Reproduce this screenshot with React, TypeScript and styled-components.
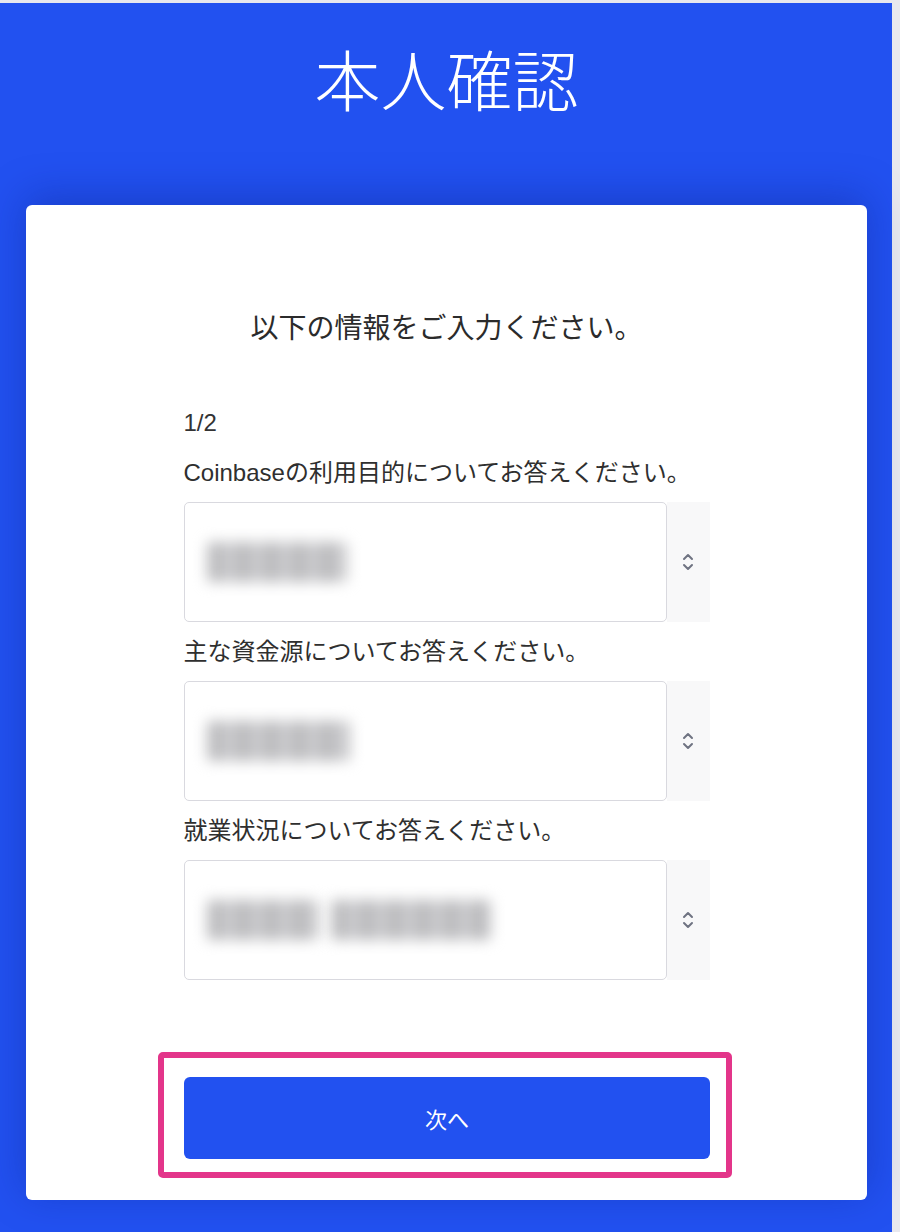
import styled, { createGlobalStyle } from 'styled-components';

const GlobalStyle = createGlobalStyle`
  body {
    margin: 0;
    background-color: #e8e8ee;
    font-family: 'Liberation Sans', 'Noto Sans CJK JP', sans-serif;
  }
`;

interface FieldProps {
  label: string;
  blurs: number[];
}

const Chevrons = () => (
  <svg width="12" height="22" viewBox="0 0 12 22" fill="none">
    <path d="M2 8 L6 4 L10 8" stroke="#6f7382" strokeWidth="2" strokeLinecap="round" strokeLinejoin="round" />
    <path d="M2 14 L6 18 L10 14" stroke="#6f7382" strokeWidth="2" strokeLinecap="round" strokeLinejoin="round" />
  </svg>
);

const SelectField = ({ label, blurs }: FieldProps) => (
  <Field>
    <Label>{label}</Label>
    <SelectRow>
      <SelectBox>
        {blurs.map((w, i) => (
          <Blur key={i} $width={w} />
        ))}
      </SelectBox>
      <ArrowCell>
        <Chevrons />
      </ArrowCell>
    </SelectRow>
  </Field>
);

const App = () => {
  return (
    <>
      <GlobalStyle />
      <Page>
        <Title>本人確認</Title>
        <Card>
          <Subtitle>以下の情報をご入力ください。</Subtitle>
          <Form>
            <Step>1/2</Step>
            <SelectField label="Coinbaseの利用目的についてお答えください。" blurs={[140]} />
            <SelectField label="主な資金源についてお答えください。" blurs={[143]} />
            <SelectField label="就業状況についてお答えください。" blurs={[112, 160]} />
          </Form>
          <Highlight>
            <NextButton>次へ</NextButton>
          </Highlight>
        </Card>
      </Page>
    </>
  );
};

export default App;

const Page = styled.div`
  width: 892px;
  margin-top: 3px;
  box-sizing: border-box;
  padding: 0 25px 32px 26px;
  background-color: #2251f0;
`;

const Title = styled.h1`
  margin: 0;
  padding-top: 34px;
  text-align: center;
  color: #ffffff;
  font-family: 'Noto Sans CJK JP', sans-serif;
  font-weight: 300;
  font-size: 66px;
  line-height: 80px;
`;

const Card = styled.div`
  margin-top: 88px;
  padding: 103px 0 22px;
  background-color: #ffffff;
  border-radius: 6px;
  box-shadow: 0 -8px 40px rgba(10, 30, 130, 0.35);
  display: flex;
  flex-direction: column;
  align-items: center;
`;

const Subtitle = styled.div`
  font-family: 'Noto Sans CJK JP', sans-serif;
  font-size: 28px;
  line-height: 36px;
  color: #2b2b2b;
`;

const Form = styled.div`
  width: 526px;
  margin-top: 63px;
  display: flex;
  flex-direction: column;
`;

const Step = styled.div`
  font-size: 24px;
  line-height: 32px;
  color: #333333;
  margin-bottom: 4px;
`;

const Field = styled.div`
  display: flex;
  flex-direction: column;
  margin-top: 14px;
`;

const Label = styled.div`
  font-size: 24px;
  line-height: 32px;
  color: #2f2f2f;
  white-space: nowrap;
`;

const SelectRow = styled.div`
  display: flex;
  margin-top: 13px;
  height: 120px;
`;

const SelectBox = styled.div`
  flex: 1;
  box-sizing: border-box;
  border: 1.5px solid #d9d9df;
  border-radius: 5px;
  display: flex;
  align-items: center;
  gap: 12px;
  padding-left: 22px;
`;

const Blur = styled.div<{ $width: number }>`
  width: ${p => p.$width}px;
  height: 40px;
  border-radius: 4px;
  background: repeating-linear-gradient(
    90deg,
    #c6c6c8 0px,
    #b5b5b8 12px,
    #d4d4d6 20px,
    #bfbfc2 28px
  );
  filter: blur(7px);
`;

const ArrowCell = styled.div`
  width: 43px;
  background-color: #f8f8f9;
  display: flex;
  align-items: center;
  justify-content: center;
`;

const Highlight = styled.div`
  margin: 72px 3px 0 0;
  width: 574px;
  box-sizing: border-box;
  border: 6px solid #e3358a;
  border-radius: 5px;
  padding: 19px 16px 13px 20px;
`;

const NextButton = styled.button`
  width: 100%;
  height: 82px;
  border: none;
  border-radius: 6px;
  background-color: #2251f0;
  color: #ffffff;
  font-family: 'Noto Sans CJK JP', sans-serif;
  font-size: 22px;
  cursor: pointer;
`;
